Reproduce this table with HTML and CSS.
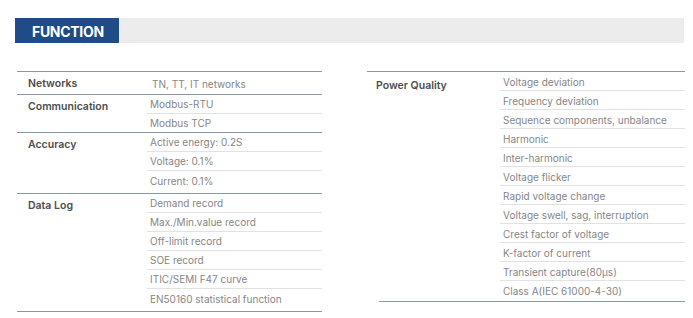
FILE: index.html
```html
<!DOCTYPE html>
<html>
<head>
<meta charset="utf-8">
<link rel="stylesheet" href="styles.css">
</head>
<body>
<div class="header">
  <div class="header-title">FUNCTION</div>
  <div class="header-bar"></div>
</div>
<div class="tables">
  <div class="table left">
    <div class="group">
      <div class="label">Networks</div>
      <div class="values"><div class="val first-tall">TN, TT, IT networks</div></div>
    </div>
    <div class="group">
      <div class="label">Communication</div>
      <div class="values">
        <div class="val">Modbus-RTU</div>
        <div class="val">Modbus TCP</div>
      </div>
    </div>
    <div class="group">
      <div class="label">Accuracy</div>
      <div class="values">
        <div class="val">Active energy: 0.2S</div>
        <div class="val">Voltage: 0.1%</div>
        <div class="val tall">Current: 0.1%</div>
      </div>
    </div>
    <div class="group">
      <div class="label">Data Log</div>
      <div class="values">
        <div class="val">Demand record</div>
        <div class="val">Max./Min.value record</div>
        <div class="val">Off-limit record</div>
        <div class="val">SOE record</div>
        <div class="val">ITIC/SEMI F47 curve</div>
        <div class="val tall">EN50160 statistical function</div>
      </div>
    </div>
  </div>
  <div class="table right">
    <div class="group last">
      <div class="label">Power Quality</div>
      <div class="values">
        <div class="val">Voltage deviation</div>
        <div class="val">Frequency deviation</div>
        <div class="val">Sequence components, unbalance</div>
        <div class="val">Harmonic</div>
        <div class="val">Inter-harmonic</div>
        <div class="val">Voltage flicker</div>
        <div class="val">Rapid voltage change</div>
        <div class="val">Voltage swell, sag, interruption</div>
        <div class="val">Crest factor of voltage</div>
        <div class="val">K-factor of current</div>
        <div class="val">Transient capture(80μs)</div>
        <div class="val">Class A(IEC 61000-4-30)</div>
      </div>
    </div>
    <div class="bottom-line"></div>
  </div>
</div>
</body>
</html>
```
FILE: styles.css
```css
html, body {
  margin: 0;
  padding: 0;
  background: #ffffff;
}
body {
  font-family: "Inter", "Noto Sans", sans-serif;
  width: 693px;
  height: 318px;
  overflow: hidden;
}
.header {
  display: flex;
  height: 25px;
  margin: 18px 9px 0 15px;
}
.header-title {
  width: 104px;
  background: #1f4b86;
  color: #ffffff;
  font-weight: 700;
  font-size: 14px;
  letter-spacing: -0.3px;
  display: flex;
  align-items: center;
  padding: 1px 0 0 17px;
  box-sizing: border-box;
}
.header-bar {
  flex: 1;
  background: #ececec;
}
.tables {
  display: flex;
  margin: 28px 0 0 17px;
  gap: 45px;
  align-items: flex-start;
}
.table {
  border-top: 1.5px solid #8799a8;
}
.table.left {
  width: 305px;
}
.table.right {
  width: 318px;
}
.group {
  display: grid;
  grid-template-columns: 130px 1fr;
  border-bottom: 1.5px solid #8799a8;
}
.right .group {
  grid-template-columns: 133px 1fr;
  border-bottom: none;
}
.label {
  font-size: 10.5px;
  font-weight: 600;
  color: #4d4d4d;
  padding: 4px 0 0 11px;
  line-height: 15px;
}
.right .label {
  padding: 6px 0 0 9px;
}
.val {
  height: 17px;
  padding-top: 1px;
  line-height: 17px;
  border-bottom: 1px solid #e2e2e2;
  font-size: 10px;
  font-weight: 400;
  color: #868686;
  padding-left: 3px;
  white-space: nowrap;
}
.right .val {
  height: 16px;
  padding-top: 2px;
  line-height: 17px;
}
.val:last-child {
  border-bottom: none;
}
.val.first-tall {
  height: 21px;
  line-height: 22px;
  padding-left: 5px;
}
.val.tall {
  height: 21px;
  line-height: 18px;
}
.bottom-line {
  margin-left: 12px;
  margin-top: 2px;
  border-top: 1.5px solid #8799a8;
}
```
